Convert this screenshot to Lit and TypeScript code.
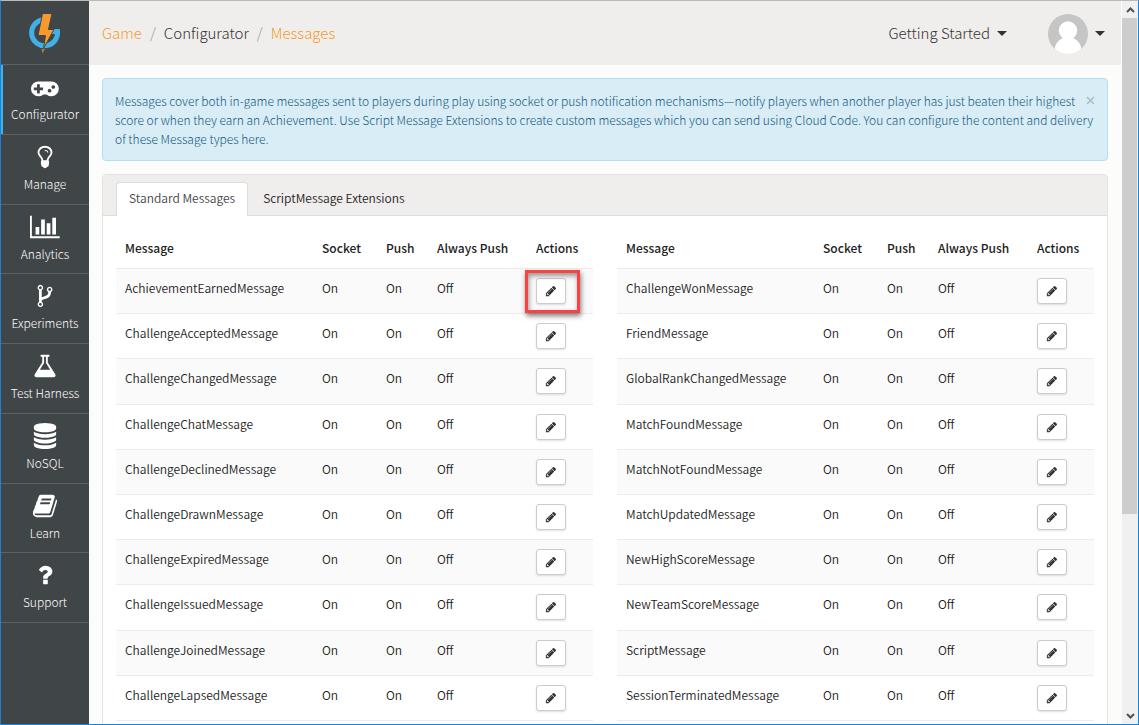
import { LitElement, html, css, svg } from "lit";
import { customElement, property, state } from "lit/decorators.js";
import { classMap } from "lit/directives/class-map.js";

interface NavEntry {
  label: string;
  units: number;
  path: string;
}

const PENCIL =
  "M491 1536l91-91-235-235-91 91v107h128v128h107zm523-928q0-22-22-22-10 0-17 7l-542 542q-7 7-7 17 0 22 22 22 10 0 17-7l542-542q7-7 7-17zm-54-192l416 416-832 832h-416v-416zm683 96q0 53-37 90l-166 166-416-416 166-165q36-38 90-38 53 0 91 38l235 234q37 39 37 91z";

const NAV: NavEntry[] = [
  {
    label: "Configurator",
    units: 1920,
    path: "M832 1088v-128q0-14-9-23t-23-9h-192v-192q0-14-9-23t-23-9h-128q-14 0-23 9t-9 23v192h-192q-14 0-23 9t-9 23v128q0 14 9 23t23 9h192v192q0 14 9 23t23 9h128q14 0 23-9t9-23v-192h192q14 0 23-9t9-23zm576 64q0-53-37.5-90.5t-90.5-37.5-90.5 37.5-37.5 90.5 37.5 90.5 90.5 37.5 90.5-37.5 37.5-90.5zm256-256q0-53-37.5-90.5t-90.5-37.5-90.5 37.5-37.5 90.5 37.5 90.5 90.5 37.5 90.5-37.5 37.5-90.5zm256 128q0 212-150 362t-362 150q-192 0-338-128h-220q-146 128-338 128-212 0-362-150t-150-362 150-362 362-150h896q212 0 362 150t150 362z",
  },
  {
    label: "Manage",
    units: 1792,
    path: "M1120 576q0 13-9.5 22.5t-22.5 9.5-22.5-9.5-9.5-22.5q0-46-54-71t-106-25q-13 0-22.5-9.5t-9.5-22.5 9.5-22.5 22.5-9.5q50 0 99.5 16t87 54 37.5 90zm160 0q0-72-34.5-134t-90-101.5-123-62-136.5-22.5-136.5 22.5-123 62-90 101.5-34.5 134q0 101 68 180 10 11 30.5 33t30.5 33q128 153 141 298h228q13-145 141-298 10-11 30.5-33t30.5-33q68-79 68-180zm128 0q0 155-103 268-45 49-74.5 87t-59.5 95.5-34 107.5q47 28 47 82 0 37-25 64 25 27 25 64 0 52-45 81 13 23 13 47 0 46-31.5 71t-77.5 25q-20 44-60 70t-87 26-87-26-60-70q-46 0-77.5-25t-31.5-71q0-24 13-47-45-29-45-81 0-37 25-64-25-27-25-64 0-54 47-82-4-50-34-107.5t-59.5-95.5-74.5-87q-103-113-103-268 0-99 44.5-184.5t117-142 164-89 186.5-32.5 186.5 32.5 164 89 117 142 44.5 184.5z",
  },
  {
    label: "Analytics",
    units: 2048,
    path: "M640 896v512h-256v-512h256zm384-512v1024h-256v-1024h256zm1024 1152v128h-2048v-1536h128v1408h1920zm-640-896v768h-256v-768h256zm384-384v1152h-256v-1152h256z",
  },
  {
    label: "Experiments",
    units: 1792,
    path: "M672 1472q0-40-28-68t-68-28-68 28-28 68 28 68 68 28 68-28 28-68zm0-1152q0-40-28-68t-68-28-68 28-28 68 28 68 68 28 68-28 28-68zm640 128q0-40-28-68t-68-28-68 28-28 68 28 68 68 28 68-28 28-68zm96 0q0 52-26 96.5t-70 69.5q-2 287-226 414-67 38-203 81-128 40-169.5 71t-41.5 100v26q44 25 70 69.5t26 96.5q0 80-56 136t-136 56-136-56-56-136q0-52 26-96.5t70-69.5v-820q-44-25-70-69.5t-26-96.5q0-80 56-136t136-56 136 56 56 136q0 52-26 96.5t-70 69.5v497q54-26 154-57 55-17 87.5-29.5t70.5-31 59-39.5 40.5-51 28-69.5 8.5-91.5q-44-25-70-69.5t-26-96.5q0-80 56-136t136-56 136 56 56 136z",
  },
  {
    label: "Test Harness",
    units: 1792,
    path: "M1591 1448q56 89 21.5 152.5t-140.5 63.5h-1152q-106 0-140.5-63.5t21.5-152.5l503-793v-399h-64q-26 0-45-19t-19-45 19-45 45-19h512q26 0 45 19t19 45-19 45-45 19h-64v399zm-779-725l-272 429h712l-272-429-20-31v-436h-128v436z",
  },
  {
    label: "NoSQL",
    units: 1792,
    path: "M896 768q237 0 443-43t325-127v170q0 69-103 128t-280 93.5-385 34.5-385-34.5-280-93.5-103-128v-170q119 84 325 127t443 43zm0 768q237 0 443-43t325-127v170q0 69-103 128t-280 93.5-385 34.5-385-34.5-280-93.5-103-128v-170q119 84 325 127t443 43zm0-384q237 0 443-43t325-127v170q0 69-103 128t-280 93.5-385 34.5-385-34.5-280-93.5-103-128v-170q119 84 325 127t443 43zm0-1152q208 0 385 34.5t280 93.5 103 128v128q0 69-103 128t-280 93.5-385 34.5-385-34.5-280-93.5-103-128v-128q0-69 103-128t280-93.5 385-34.5z",
  },
  {
    label: "Learn",
    units: 1792,
    path: "M1703 478q40 57 18 129l-275 906q-19 64-76.5 107.5t-122.5 43.5h-923q-77 0-148.5-53.5t-99.5-131.5q-24-67-2-127 0-4 3-27t4-37q1-8-3-21.5t-3-19.5q2-11 8-21t16.5-23.5 16.5-23.5q23-38 45-91.5t30-91.5q3-10 .5-30t-.5-28q3-11 17-28t17-23q21-36 42-92t25-90q1-9-2.5-32t.5-28q4-13 22-30.5t22-22.5q19-26 42.5-84.5t27.5-96.5q1-8-3-25.5t-2-26.5q2-8 9-18t18-23 17-21q8-12 16.5-30.5t15-35 16-36 19.5-32 26.5-23.5 36-11.5 47.5 5.5l-1 3q38-9 51-9h761q74 0 114 56t18 130l-274 906q-36 119-71.5 153.5t-128.5 34.5h-869q-27 0-38 15-11 16-1 43 24 70 144 70h923q29 0 56-15.5t35-41.5l300-987q7-22 5-57 38 15 59 43zm-1064 2q-4 13 2 22.5t20 9.5h608q13 0 25.5-9.5t16.5-22.5l21-64q4-13-2-22.5t-20-9.5h-608q-13 0-25.5 9.5t-16.5 22.5zm-83 256q-4 13 2 22.5t20 9.5h608q13 0 25.5-9.5t16.5-22.5l21-64q4-13-2-22.5t-20-9.5h-608q-13 0-25.5 9.5t-16.5 22.5z",
  },
  {
    label: "Support",
    units: 1792,
    path: "M1088 1256v240q0 16-12 28t-28 12h-240q-16 0-28-12t-12-28v-240q0-16 12-28t28-12h240q16 0 28 12t12 28zm316-600q0 54-15.5 101t-35 76.5-55 59.5-57.5 43.5-61 35.5q-41 23-68.5 65t-27.5 67q0 17-12 32.5t-28 15.5h-240q-15 0-25.5-18.5t-10.5-37.5v-45q0-83 65-156.5t143-108.5q59-27 84-56t25-76q0-42-46.5-74t-107.5-32q-65 0-108 29-35 25-107 115-13 16-31 16-12 0-25-8l-164-125q-13-10-15.5-25t5.5-28q160-266 464-266 80 0 161 31t146 83 106 127.5 41 158.5z",
  },
];

const LEFT = [
  "AchievementEarnedMessage",
  "ChallengeAcceptedMessage",
  "ChallengeChangedMessage",
  "ChallengeChatMessage",
  "ChallengeDeclinedMessage",
  "ChallengeDrawnMessage",
  "ChallengeExpiredMessage",
  "ChallengeIssuedMessage",
  "ChallengeJoinedMessage",
  "ChallengeLapsedMessage",
];

const RIGHT = [
  "ChallengeWonMessage",
  "FriendMessage",
  "GlobalRankChangedMessage",
  "MatchFoundMessage",
  "MatchNotFoundMessage",
  "MatchUpdatedMessage",
  "NewHighScoreMessage",
  "NewTeamScoreMessage",
  "ScriptMessage",
  "SessionTerminatedMessage",
];

@customElement("side-nav")
class SideNav extends LitElement {
  @state() private current = "Configurator";

  static styles = css`
    :host {
      display: block;
      background: #404547;
    }
    .logo {
      display: flex;
      justify-content: center;
      height: 63px;
      border-bottom: 1px solid #5c6163;
    }
    .logo svg {
      margin-top: 12px;
    }
    .list {
      display: grid;
      grid-template-rows: repeat(8, 1fr);
      height: 558px;
    }
    .item {
      display: flex;
      flex-direction: column;
      align-items: center;
      gap: 4px;
      padding-top: 9px;
      border-bottom: 1px solid #5c6163;
      color: #fff;
      font-size: 12px;
      font-weight: 300;
      line-height: 20px;
      text-decoration: none;
    }
    .item.active {
      box-shadow: inset 2px 0 #3fb3ea;
    }
    .icon {
      height: 26px;
      fill: #fff;
    }
  `;

  render() {
    return html`
      <div class="logo">
        <svg width="34" height="42" viewBox="0 0 34 42" role="img" aria-label="Home">
          <path
            d="M14 7A13 13 0 1 0 29.500 18.500H24"
            fill="none"
            stroke="#42b0e6"
            stroke-width="5"
          />
          <path
            d="M14.500 0.500H24L20.500 16.500H26L15.500 35.500L17.500 22.500H10Z"
            fill="#f79a2d"
            stroke="#404547"
            stroke-width="1"
          />
          <path d="M13.500 36H17L14.500 40.500Z" fill="#b97a35" />
        </svg>
      </div>
      <nav class="list" aria-label="Main">
        ${NAV.map(
          (n) => html`
            <a
              class=${classMap({ item: true, active: n.label === this.current })}
              href="#"
              @click=${(e: Event) => {
                e.preventDefault();
                this.current = n.label;
              }}
            >
              <svg class="icon" viewBox="0 0 ${n.units} 1792" aria-hidden="true">
                ${svg`<path d=${n.path} />`}
              </svg>
              <span>${n.label}</span>
            </a>
          `
        )}
      </nav>
    `;
  }
}

@customElement("message-table")
class MessageTable extends LitElement {
  @property({ attribute: false }) rows: string[] = [];
  @property() highlight = "";

  static styles = css`
    :host {
      display: block;
    }
    .table {
      width: 100%;
      height: 492px;
      table-layout: fixed;
      border-spacing: 0;
      border-bottom: 1px solid #ececec;
      font-size: 12px;
      line-height: 19px;
    }
    .socket {
      width: 64px;
    }
    .push {
      width: 51px;
    }
    .always {
      width: 99px;
    }
    .actions {
      width: 66px;
    }
    th {
      padding: 9px 0 11px 9px;
      text-align: left;
      font-weight: 500;
      white-space: nowrap;
    }
    td {
      padding: 9px 0 9px 9px;
      border-top: 1px solid #ececec;
      vertical-align: top;
    }
    tbody tr:nth-child(odd) {
      background: #fafafa;
    }
    .action {
      display: flex;
      position: relative;
      width: 30px;
    }
    .edit {
      display: flex;
      align-items: center;
      justify-content: center;
      width: 30px;
      height: 26px;
      padding: 0;
      border: 1px solid #ccc;
      border-radius: 3px;
      background: #fff;
      box-shadow: 0 1px 2px rgba(0, 0, 0, 0.12);
    }
    .edit svg {
      fill: #333;
    }
    .ring {
      position: absolute;
      inset: -8px -14px -9px -11px;
      border: 3px solid #fb4141;
      box-shadow: 1px 3px 5px rgba(0, 0, 0, 0.5), inset 1px 3px 5px rgba(0, 0, 0, 0.4);
      pointer-events: none;
    }
  `;

  render() {
    return html`
      <table class="table">
        <colgroup>
          <col />
          <col class="socket" />
          <col class="push" />
          <col class="always" />
          <col class="actions" />
        </colgroup>
        <thead>
          <tr>
            <th scope="col">Message</th>
            <th scope="col">Socket</th>
            <th scope="col">Push</th>
            <th scope="col">Always Push</th>
            <th scope="col">Actions</th>
          </tr>
        </thead>
        <tbody>
          ${this.rows.map(
            (name) => html`
              <tr>
                <td>${name}</td>
                <td>On</td>
                <td>On</td>
                <td>Off</td>
                <td>
                  <div class="action">
                    <button class="edit" type="button" aria-label="Edit">
                      <svg width="12" height="12" viewBox="0 0 1792 1792" aria-hidden="true">
                        <path d=${PENCIL} />
                      </svg>
                    </button>
                    ${name === this.highlight ? html`<span class="ring"></span>` : null}
                  </div>
                </td>
              </tr>
            `
          )}
        </tbody>
      </table>
    `;
  }
}

@customElement("app-root")
class AppRoot extends LitElement {
  @state() private tab = 0;

  static styles = css`
    :host {
      display: block;
      color: #222;
      font-family: "Noto Sans CJK SC", "Noto Sans", sans-serif;
      font-weight: 350;
    }
    .window {
      box-sizing: border-box;
      display: grid;
      grid-template-columns: 88px minmax(0, 1fr) 16px;
      grid-template-rows: minmax(0, 1fr);
      height: 100vh;
      overflow: hidden;
      border: 1px solid #1a82d8;
      border-top-color: #bdbbba;
      background: #fcfcfa;
    }
    .page {
      min-width: 0;
      overflow: hidden;
    }
    .header {
      display: flex;
      align-items: center;
      justify-content: space-between;
      height: 64px;
      margin-right: 1px;
      padding: 0 16px 0 13px;
      background: #f0eeed;
      font-size: 15px;
      font-weight: 300;
      line-height: 24px;
    }
    .crumbs {
      display: flex;
      gap: 8px;
    }
    .crumbs a {
      color: #f79a2d;
      text-decoration: none;
    }
    .crumbs .here {
      color: #333;
    }
    .slash {
      color: #999;
    }
    .tools {
      display: flex;
      align-items: center;
      gap: 41px;
    }
    .menu {
      display: flex;
      align-items: center;
      gap: 7px;
      padding: 0;
      border: 0;
      background: none;
      color: #333;
      font: inherit;
    }
    .avatar {
      margin-top: 2px;
    }
    .caret {
      border: 5px solid transparent;
      border-top-color: #333;
      border-bottom: 0;
    }
    .content {
      display: flex;
      flex-direction: column;
      gap: 13px;
      padding: 13px 14px 0 13px;
    }
    .alert {
      padding: 12px 8px 12px 12px;
      border: 1px solid #b5dff0;
      border-radius: 4px;
      background: #d9edf7;
      color: #14587d;
      font-size: 12px;
      font-weight: 300;
      line-height: 19px;
    }
    .alert p {
      margin: 0;
    }
    .close {
      float: right;
      margin: 5px 4px 5px 0;
      padding: 0;
      border: 0;
      background: none;
      line-height: 0;
    }
    .panel {
      border: 1px solid #e3e3e3;
      border-radius: 4px 4px 0 0;
      background: #fff;
    }
    .tabs {
      display: flex;
      gap: 2px;
      padding: 7px 13px 0;
      border-bottom: 1px solid #ddd;
      background: #f0eeed;
    }
    .tab {
      margin-bottom: -1px;
      padding: 5px 12px 9px;
      border: 1px solid transparent;
      border-bottom: 0;
      border-radius: 4px 4px 0 0;
      background: none;
      color: #222;
      font: inherit;
      font-size: 12px;
      line-height: 19px;
    }
    .tab.active {
      border-color: #ddd;
      background: #fff;
      color: #444;
    }
    .tables {
      display: grid;
      grid-template-columns: repeat(2, minmax(0, 1fr));
      gap: 24px;
      padding: 13px 13px 24px;
    }
    .scroll {
      display: flex;
      flex-direction: column;
      background: #f0f0f0;
    }
    .arrow {
      display: flex;
      align-items: center;
      justify-content: center;
      height: 17px;
    }
    .track {
      flex: 1;
    }
    .thumb {
      width: 15px;
      height: 72%;
      background: #cdcdcd;
    }
  `;

  private renderTab(label: string, index: number) {
    return html`
      <button
        type="button"
        role="tab"
        aria-selected=${this.tab === index}
        class=${classMap({ tab: true, active: this.tab === index })}
        @click=${() => (this.tab = index)}
      >
        ${label}
      </button>
    `;
  }

  render() {
    return html`
      <div class="window">
        <side-nav></side-nav>
        <main class="page">
          <header class="header">
            <nav class="crumbs" aria-label="Breadcrumb">
              <a href="#">Game</a>
              <span class="slash">/</span>
              <a class="here" href="#">Configurator</a>
              <span class="slash">/</span>
              <a href="#">Messages</a>
            </nav>
            <div class="tools">
              <button class="menu" type="button">Getting Started <span class="caret"></span></button>
              <button class="menu" type="button" aria-label="Account">
                <svg class="avatar" width="40" height="40" viewBox="0 0 40 40" aria-hidden="true">
                  <clipPath id="round"><circle cx="20" cy="20" r="20" /></clipPath>
                  <g clip-path="url(#round)">
                    <rect width="40" height="40" fill="#c5c5c5" />
                    <circle cx="20" cy="16.500" r="9.200" fill="#fff" />
                    <path d="M6 40C6 31 10 25 16 24H24C30 25 34 31 34 40Z" fill="#fff" />
                  </g>
                </svg>
                <span class="caret"></span>
              </button>
            </div>
          </header>
          <div class="content">
            <section class="alert">
              <button class="close" type="button" aria-label="Close">
                <svg width="9" height="9" viewBox="0 0 9 9" aria-hidden="true">
                  <path d="M1 1L8 8M8 1L1 8" stroke="#a9bcc5" stroke-width="1.500" />
                </svg>
              </button>
              <p>
                Messages cover both in-game messages sent to players during play using socket or push
                notification mechanisms—notify players when another player has just beaten their highest
                score or when they earn an Achievement. Use Script Message Extensions to create custom
                messages which you can send using Cloud Code. You can configure the content and delivery
                of these Message types here.
              </p>
            </section>
            <section class="panel">
              <div class="tabs" role="tablist">
                ${this.renderTab("Standard Messages", 0)}
                ${this.renderTab("ScriptMessage Extensions", 1)}
              </div>
              <div class="tables">
                <message-table .rows=${LEFT} highlight="AchievementEarnedMessage"></message-table>
                <message-table .rows=${RIGHT}></message-table>
              </div>
            </section>
          </div>
        </main>
        <div class="scroll" aria-hidden="true">
          <div class="arrow">
            <svg width="9" height="6" viewBox="0 0 9 6">
              <path d="M1 5L4.500 1.500L8 5" fill="none" stroke="#505050" stroke-width="2" />
            </svg>
          </div>
          <div class="track"><div class="thumb"></div></div>
          <div class="arrow">
            <svg width="9" height="6" viewBox="0 0 9 6">
              <path d="M1 1L4.500 4.500L8 1" fill="none" stroke="#505050" stroke-width="2" />
            </svg>
          </div>
        </div>
      </div>
    `;
  }
}
